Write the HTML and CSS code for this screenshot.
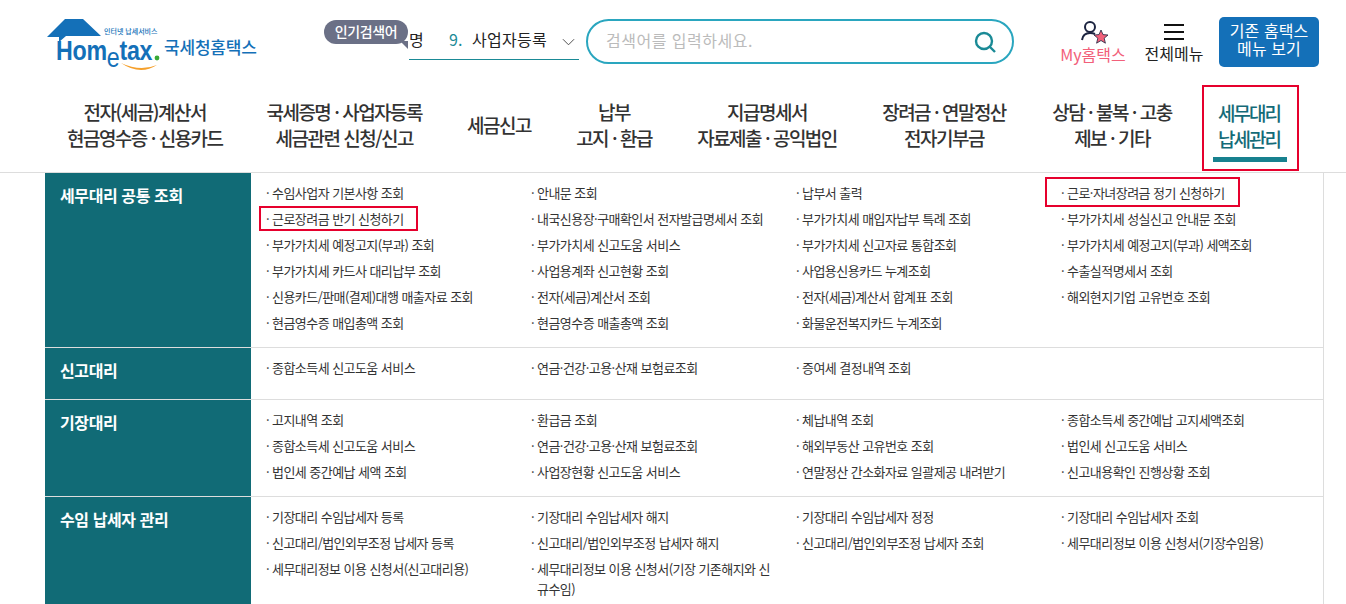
FILE: index.html
```html
<!DOCTYPE html>
<html lang="ko">
<head>
  <meta charset="UTF-8" />
  <title>국세청홈택스</title>
  <link rel="stylesheet" href="styles.css">
</head>
<body>
  <header class="top">
    <a class="logo">
      <svg class="logo-art" width="125" height="56" viewBox="0 0 125 56">
        <path d="M1 19 L19 1 H37 L55 18 H20 L13 24 V19 H1 Z" fill="#1470b8" />
        <path d="M75 45 Q94 58 111 47 Q94 54 75 45 Z" fill="#f5a02c" />
        <circle cx="111" cy="40" r="2.4" fill="#3aa935" />
      </svg>
      <span class="logo-small">인터넷 납세서비스</span>
      <span class="logo-word">Hom<i>e</i>tax</span>
      <span class="logo-name">국세청홈택스</span>
    </a>

    <div class="popular">
      <span class="bubble">인기검색어</span>
      <div class="rolling">
        <span class="clip">명</span>
        <span class="num">9.</span>
        <span class="word">사업자등록</span>
        <svg class="chev" width="13" height="8" viewBox="0 0 14 8"><path d="M1 1 L7 7 L13 1" fill="none" stroke="#444" stroke-width="1" /></svg>
      </div>
    </div>

    <div class="search">
      <span class="ph">검색어를 입력하세요.</span>
      <svg width="22" height="22" viewBox="0 0 22 22"><circle cx="10" cy="10" r="8" fill="none" stroke="#1a8a96" stroke-width="2.4" /><path d="M16 16 L21 21" stroke="#1a8a96" stroke-width="2.4" /></svg>
    </div>

    <a class="tool my">
      <svg width="30" height="25" viewBox="0 0 30 25">
        <circle cx="11" cy="7" r="5" fill="none" stroke="#1c2440" stroke-width="2" />
        <path d="M3 20 Q4 13 11 13 Q14 13 16 14" fill="none" stroke="#1c2440" stroke-width="2" />
        <path d="M22 10 L24 14.6 L29 15 L25.2 18.2 L26.4 23.2 L22 20.5 L17.6 23.2 L18.8 18.2 L15 15 L20 14.6 Z" fill="#f2607a" stroke="#1c2440" stroke-width="0.8" />
      </svg>
      <span>My홈택스</span>
    </a>
    <a class="tool all">
      <span class="burger"><i></i><i></i><i></i></span>
      <span>전체메뉴</span>
    </a>
    <a class="oldmenu">기존 홈택스<br>메뉴 보기</a>
  </header>

  <nav class="gnb">
    <a class="w1">전자(세금)계산서<br>현금영수증 · 신용카드</a>
    <a class="w2">국세증명 · 사업자등록<br>세금관련 신청/신고</a>
    <a class="w3">세금신고</a>
    <a class="w4">납부<br>고지 · 환급</a>
    <a class="w5">지급명세서<br>자료제출 · 공익법인</a>
    <a class="w6">장려금 · 연말정산<br>전자기부금</a>
    <a class="w7">상담 · 불복 · 고충<br>제보 · 기타</a>
    <a class="w8 on"><span>세무대리<br>납세관리</span></a>
  </nav>

  <main class="panel">
    <section class="group">
      <h3>세무대리 공통 조회</h3>
      <ul>
        <li><a>수임사업자 기본사항 조회</a></li>
        <li><a>안내문 조회</a></li>
        <li><a>납부서 출력</a></li>
        <li><a class="mark wide">근로·자녀장려금 정기 신청하기</a></li>
        <li><a class="mark">근로장려금 반기 신청하기</a></li>
        <li><a>내국신용장·구매확인서 전자발급명세서 조회</a></li>
        <li><a>부가가치세 매입자납부 특례 조회</a></li>
        <li><a>부가가치세 성실신고 안내문 조회</a></li>
        <li><a>부가가치세 예정고지(부과) 조회</a></li>
        <li><a>부가가치세 신고도움 서비스</a></li>
        <li><a>부가가치세 신고자료 통합조회</a></li>
        <li><a>부가가치세 예정고지(부과) 세액조회</a></li>
        <li><a>부가가치세 카드사 대리납부 조회</a></li>
        <li><a>사업용계좌 신고현황 조회</a></li>
        <li><a>사업용신용카드 누계조회</a></li>
        <li><a>수출실적명세서 조회</a></li>
        <li><a>신용카드/판매(결제)대행 매출자료 조회</a></li>
        <li><a>전자(세금)계산서 조회</a></li>
        <li><a>전자(세금)계산서 합계표 조회</a></li>
        <li><a>해외현지기업 고유번호 조회</a></li>
        <li><a>현금영수증 매입총액 조회</a></li>
        <li><a>현금영수증 매출총액 조회</a></li>
        <li><a>화물운전복지카드 누계조회</a></li>
      </ul>
    </section>
    <section class="group">
      <h3>신고대리</h3>
      <ul>
        <li><a>종합소득세 신고도움 서비스</a></li>
        <li><a>연금·건강·고용·산재 보험료조회</a></li>
        <li><a>증여세 결정내역 조회</a></li>
      </ul>
    </section>
    <section class="group">
      <h3>기장대리</h3>
      <ul>
        <li><a>고지내역 조회</a></li>
        <li><a>환급금 조회</a></li>
        <li><a>체납내역 조회</a></li>
        <li><a>종합소득세 중간예납 고지세액조회</a></li>
        <li><a>종합소득세 신고도움 서비스</a></li>
        <li><a>연금·건강·고용·산재 보험료조회</a></li>
        <li><a>해외부동산 고유번호 조회</a></li>
        <li><a>법인세 신고도움 서비스</a></li>
        <li><a>법인세 중간예납 세액 조회</a></li>
        <li><a>사업장현황 신고도움 서비스</a></li>
        <li><a>연말정산 간소화자료 일괄제공 내려받기</a></li>
        <li><a>신고내용확인 진행상황 조회</a></li>
      </ul>
    </section>
    <section class="group">
      <h3>수임 납세자 관리</h3>
      <ul>
        <li><a>기장대리 수임납세자 등록</a></li>
        <li><a>기장대리 수임납세자 해지</a></li>
        <li><a>기장대리 수임납세자 정정</a></li>
        <li><a>기장대리 수임납세자 조회</a></li>
        <li><a>신고대리/법인외부조정 납세자 등록</a></li>
        <li><a>신고대리/법인외부조정 납세자 해지</a></li>
        <li><a>신고대리/법인외부조정 납세자 조회</a></li>
        <li><a>세무대리정보 이용 신청서(기장수임용)</a></li>
        <li><a>세무대리정보 이용 신청서(신고대리용)</a></li>
        <li><a>세무대리정보 이용 신청서(기장 기존해지와 신규수임)</a></li>
      </ul>
    </section>
  </main>
</body>
</html>
```

FILE: styles.css
```css
* {
  box-sizing: border-box;
}

html, body {
  height: 604px;
  overflow: hidden;
}

body {
  margin: 0;
  background: #fff;
  color: #222;
  font-family: "Noto Sans CJK KR", "Noto Sans", sans-serif;
}

ul {
  list-style: none;
  margin: 0;
  padding: 0;
}

/* top bar */
.top {
  display: flex;
  height: 85px;
  align-items: flex-start;
}

.logo {
  position: relative;
  display: block;
  width: 278px;
  height: 70px;
  margin-left: 46px;
  flex: none;
}

.logo-art {
  position: absolute;
  left: 0;
  top: 18px;
}

.logo-small {
  position: absolute;
  left: 58px;
  top: 27px;
  font-size: 7px;
  font-weight: 500;
  line-height: 9px;
  color: #1470b8;
  white-space: nowrap;
}

.logo-word {
  position: absolute;
  left: 10px;
  top: 41px;
  font-family: "Liberation Sans", sans-serif;
  font-weight: 700;
  font-size: 27px;
  line-height: 20px;
  letter-spacing: -0.3px;
  color: #1470b8;
  transform: scaleX(0.86);
  transform-origin: left top;
}

.logo-word i {
  font-style: normal;
  font-size: 27px;
  position: relative;
  top: 7px;
  font-weight: 400;
}

.logo-name {
  position: absolute;
  left: 118px;
  top: 35px;
  font-size: 17px;
  line-height: 24px;
  font-weight: 500;
  letter-spacing: -0.2px;
  color: #1470b8;
  white-space: nowrap;
}

.popular {
  position: relative;
  width: 255px;
  flex: none;
  height: 60px;
}

.bubble {
  position: absolute;
  left: 0;
  top: 20px;
  width: 84px;
  height: 24px;
  border-radius: 12px;
  background: #6b7086;
  color: #fff;
  font-size: 14px;
  font-weight: 500;
  line-height: 23px;
  text-align: center;
  letter-spacing: -0.4px;
  z-index: 1;
}

.bubble::after {
  content: "";
  position: absolute;
  right: 0;
  bottom: -5px;
  border-left: 8px solid transparent;
  border-top: 8px solid #6b7086;
}

.rolling {
  display: flex;
  align-items: center;
  margin-left: 85px;
  margin-top: 27px;
  width: 170px;
  height: 33px;
  border-bottom: 1px solid #1a8a96;
  padding-bottom: 9px;
  font-size: 16px;
}

.clip {
  width: 40px;
}

.num {
  width: 23px;
  color: #1a8a96;
}

.word {
  width: 90px;
  letter-spacing: 0.3px;
}

.chev {
  margin-top: 6px;
}

.search {
  display: flex;
  align-items: center;
  justify-content: space-between;
  width: 428px;
  height: 45px;
  margin: 19px 0 0 7px;
  padding: 0 16px 0 18px;
  border: 2px solid #2aa6bf;
  border-radius: 23px;
  flex: none;
}

.ph {
  position: relative;
  bottom: 2px;
  font-size: 16px;
  color: #bbb;
  letter-spacing: 0.5px;
}

.tool {
  display: flex;
  flex-direction: column;
  align-items: center;
  flex: none;
  font-size: 16px;
  line-height: 18px;
  white-space: nowrap;
}

.my {
  width: 76px;
  margin: 20px 0 0 41px;
  color: #f2607a;
}

.my svg {
  margin-left: 2px;
}

.all {
  width: 70px;
  margin: 24px 0 0 8px;
}

.burger {
  display: block;
  width: 20px;
  height: 19px;
  margin-bottom: 1px;
}

.burger i {
  display: block;
  height: 2px;
  margin-bottom: 5px;
  background: #111;
}

.oldmenu {
  flex: none;
  width: 100px;
  height: 50px;
  margin: 17px 0 0 10px;
  padding-top: 4px;
  border-radius: 5px;
  background: #1470b8;
  color: #fff;
  font-size: 16px;
  line-height: 18px;
  text-align: center;
  letter-spacing: 0.1px;
}

/* main menu */
.gnb {
  display: flex;
  height: 88px;
  padding-left: 45px;
  border-bottom: 1px solid #ddd;
}

.gnb a {
  display: flex;
  align-items: center;
  justify-content: center;
  flex: none;
  height: 80px;
  padding-bottom: 1px;
  font-size: 19px;
  font-weight: 500;
  line-height: 26px;
  letter-spacing: -1.5px;
  text-align: center;
  color: #333;
}

.w1, .w2 { width: 199.5px; }
.w3 { width: 110px; }
.w4 { width: 120px; }
.w5 { width: 186px; }
.w6, .w7 { width: 168px; }

.gnb .w8 {
  position: relative;
  width: 97px;
  height: 86px;
  margin-left: 6px;
  padding: 13px 3px 0 0;
  border: 2px solid #e6002d;
  color: #146b78;
  align-items: flex-start;
  letter-spacing: -2px;
}

.w8::after {
  content: "";
  position: absolute;
  left: 9px;
  right: 10px;
  bottom: 7px;
  height: 5px;
  background: #17818f;
}

/* sub menu panel */
.panel {
  width: 1279px;
  margin-left: 45px;
  border-right: 1px solid #ddd;
}

.group {
  display: flex;
  min-height: 52px;
  border-bottom: 1px solid #ddd;
}

.group h3 {
  flex: none;
  width: 206px;
  margin: 0;
  padding: 10px 15px;
  background: #116b76;
  color: #fff;
  font-size: 16px;
  font-weight: 700;
  line-height: 24px;
  letter-spacing: -0.4px;
}

.group ul {
  flex: 1;
  display: grid;
  grid-template-columns: repeat(4, 265px);
  padding: 7px 0 11px 15px;
  align-content: start;
}

.group li {
  position: relative;
  width: 240px;
  padding: 3px 0 3px 6px;
  font-size: 13px;
  line-height: 20px;
  letter-spacing: -0.55px;
  color: #333;
}

.group li::before {
  content: "·";
  position: absolute;
  left: 0;
}

.group a {
  position: relative;
}

.mark::after {
  content: "";
  position: absolute;
  left: -13px;
  right: -14px;
  top: -3px;
  bottom: -3px;
  border: 2px solid #e6002d;
}

.wide::after {
  left: -22px;
  right: -15px;
  top: -6px;
  bottom: -5px;
}
```
